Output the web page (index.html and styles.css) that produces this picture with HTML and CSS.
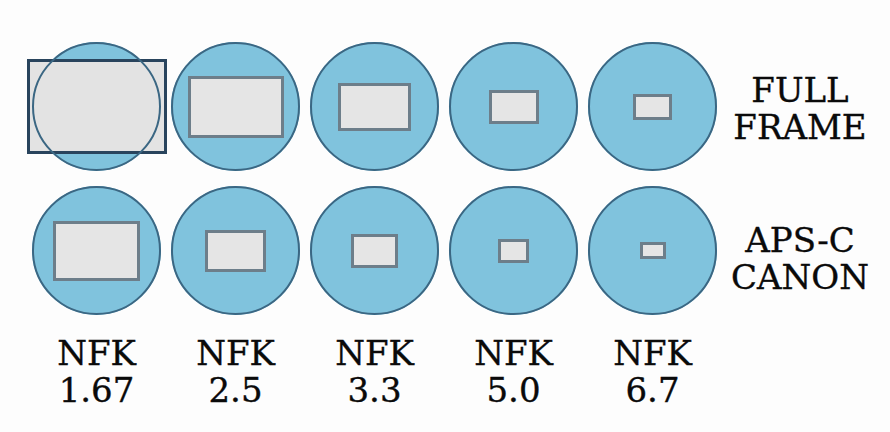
FILE: index.html
```html
<!DOCTYPE html>
<html lang="en">
<head>
<meta charset="utf-8">
<title>NFK crop factors</title>
<link rel="stylesheet" href="styles.css">
</head>
<body>
<main class="chart">
  <div class="lens"><div class="frame frame-big" style="width:140px;height:95px"></div></div>
  <div class="lens"><div class="frame" style="width:96px;height:62px"></div></div>
  <div class="lens"><div class="frame" style="width:73px;height:48px"></div></div>
  <div class="lens"><div class="frame" style="width:50px;height:34px"></div></div>
  <div class="lens"><div class="frame" style="width:39px;height:26px"></div></div>
  <div class="label label-ff">FULL<br>FRAME</div>

  <div class="lens"><div class="frame" style="width:87px;height:60px"></div></div>
  <div class="lens"><div class="frame" style="width:61px;height:42px"></div></div>
  <div class="lens"><div class="frame" style="width:47px;height:34px"></div></div>
  <div class="lens"><div class="frame" style="width:31px;height:24px"></div></div>
  <div class="lens"><div class="frame" style="width:26px;height:17px"></div></div>
  <div class="label label-aps">APS-C<br>CANON</div>

  <div class="factor">NFK<br>1.67</div>
  <div class="factor">NFK<br>2.5</div>
  <div class="factor">NFK<br>3.3</div>
  <div class="factor">NFK<br>5.0</div>
  <div class="factor">NFK<br>6.7</div>
</main>
</body>
</html>
```

FILE: styles.css
```css
html, body {
  margin: 0;
  padding: 0;
  background: #fdfdfd;
}

.chart {
  display: grid;
  grid-template-columns: repeat(5, 129px) 146px;
  grid-template-rows: 129px 129px auto;
  column-gap: 10px;
  row-gap: 15px;
  padding: 42px 0 0 32px;
  font-family: "DejaVu Serif", "Liberation Serif", serif;
  color: #0a0a0a;
  -webkit-text-stroke: 0.35px #0a0a0a;
}

.lens {
  position: relative;
  width: 129px;
  height: 129px;
  box-sizing: border-box;
  border-radius: 50%;
  background: #80c3dd;
  display: flex;
  align-items: center;
  justify-content: center;
}

.lens::after {
  content: "";
  position: absolute;
  inset: 0;
  border-radius: 50%;
  border: 2px solid #3b6783;
  pointer-events: none;
}

.frame {
  flex: none;
  box-sizing: border-box;
  background: #e5e5e5;
  border: 3px solid #6d7e8a;
}

.frame-big {
  background: #e3e3e3;
  border: 3px solid #29445d;
}

.label {
  font-size: 34px;
  line-height: 37px;
  text-align: center;
  align-self: start;
  white-space: nowrap;
}

.label-ff {
  padding-top: 30px;
}

.label-aps {
  padding-top: 36px;
}

.factor {
  font-size: 34px;
  line-height: 37px;
  text-align: center;
  padding-top: 5px;
}
```
